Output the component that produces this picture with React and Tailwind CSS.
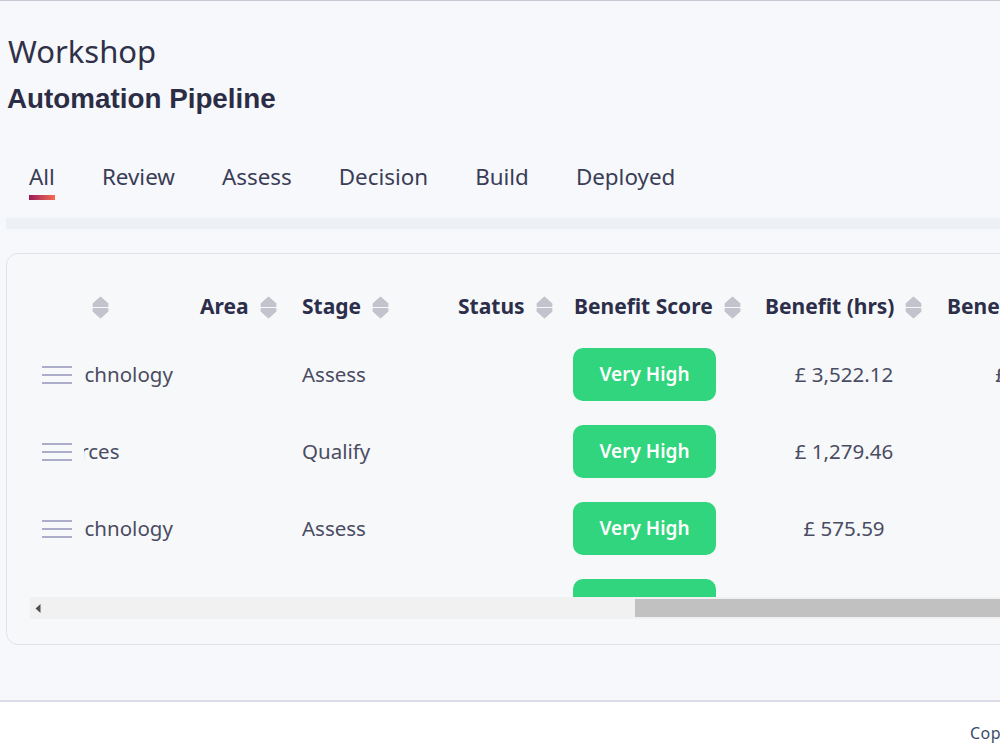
import React from "react";

const SortIcon = () => (
  <svg width="17" height="23" viewBox="0 0 17 23" className="shrink-0">
    <path d="M8.5 1.2 L15.8 7.6 L15.8 10.3 L1.2 10.3 L1.2 7.6 Z" fill="#c3c3cd" stroke="#c3c3cd" strokeWidth="1.2" strokeLinejoin="round" />
    <path d="M1.2 12.7 L15.8 12.7 L15.8 15.4 L8.5 21.8 L1.2 15.4 Z" fill="#c3c3cd" stroke="#c3c3cd" strokeWidth="1.2" strokeLinejoin="round" />
  </svg>
);

const Hamburger = () => (
  <div className="flex flex-col gap-[6px] w-[30px]">
    <div className="h-[2px] bg-[#acadcb]" />
    <div className="h-[2px] bg-[#acadcb]" />
    <div className="h-[2px] bg-[#acadcb]" />
  </div>
);

const HeadCell = ({ w, label, pl = "pl-[10px]" }) => (
  <div className={`${w} ${pl} shrink-0 flex items-center gap-[11px] whitespace-nowrap`}>
    <span className="font-bold text-[21px] text-[#2c2e4a]">{label}</span>
    <SortIcon />
  </div>
);

const rows = [
  { c1: "Technology", ml: "-ml-[21px]", stage: "Assess", hrs: "£ 3,522.12", last: "£ 1,761.06", show: true },
  { c1: "Resources", ml: "-ml-[63px]", stage: "Qualify", hrs: "£ 1,279.46", last: "£ 639.73", show: true },
  { c1: "Technology", ml: "-ml-[21px]", stage: "Assess", hrs: "£ 575.59", last: "£ 287.80", show: true },
  { c1: "", ml: "", stage: "", hrs: "", last: "", show: false },
];

const tabs = ["All", "Review", "Assess", "Decision", "Build", "Deployed"];

export default function App() {
  return (
    <div className="w-full min-h-[750px] overflow-hidden bg-white" style={{ fontFamily: '"Noto Sans", "Open Sans", sans-serif' }}>
      <main className="w-[1120px] h-[702px] bg-[#f7f8fb] border-t border-[#c8c8d2] border-b-2 border-b-[#dddbe8] pl-[6px]">
        <h1 className="mt-[31px] ml-[2px] text-[31px] leading-[38px] font-normal text-[#2f3149]">Workshop</h1>
        <h2
          className="mt-[13px] ml-[1px] text-[27.8px] leading-[32px] font-bold text-[#2b2d45]"
          style={{ fontFamily: '"Liberation Sans", Arial, sans-serif' }}
        >
          Automation Pipeline
        </h2>

        <nav className="mt-[47px] pl-[23px] flex gap-[47px]">
          {tabs.map((t, i) => (
            <div key={t} className="flex flex-col items-stretch">
              <span className="text-[22.4px] leading-[30px] text-[#3a3d56] whitespace-nowrap">{t}</span>
              {i === 0 ? (
                <div className="mt-[3px] h-[5px] bg-gradient-to-r from-[#991858] to-[#f76b4f]" />
              ) : (
                <div className="mt-[3px] h-[5px]" />
              )}
            </div>
          ))}
        </nav>

        <div className="mt-[18px] h-[11px] bg-[#edf0f5]" />

        <section className="mt-[24px] border border-[#e1e3e8] rounded-[12px] bg-[#f7f8fa] pt-[24px] pl-[23px] pb-[25px]">
          <div className="h-[319px] overflow-hidden flex flex-col">
            {/* header row */}
            <div className="h-[58px] shrink-0 flex items-center">
              <div className="w-[54px] shrink-0" />
              <div className="flex-1 min-w-0 overflow-hidden flex items-center">
                <div className="w-[106px] shrink-0 pl-[8px] flex items-center">
                  <SortIcon />
                </div>
                <HeadCell w="w-[102px]" label="Area" />
                <HeadCell w="w-[156px]" label="Stage" />
                <HeadCell w="w-[116px]" label="Status" />
                <HeadCell w="w-[191px]" label="Benefit Score" />
                <HeadCell w="w-[182px]" label="Benefit (hrs)" />
                <HeadCell w="w-[219px]" label="Benefit (£)" />
              </div>
            </div>

            {rows.map((r, idx) => (
              <div key={idx} className="h-[77px] shrink-0 flex items-center">
                <div className="w-[54px] shrink-0 pl-[12px]">
                  {r.show ? <Hamburger /> : null}
                </div>
                <div className="flex-1 min-w-0 overflow-hidden flex items-center text-[20.5px] text-[#4a4c63]">
                  <div className="w-[106px] shrink-0 overflow-hidden whitespace-nowrap">
                    <span className={`inline-block ${r.ml}`}>{r.c1}</span>
                  </div>
                  <div className="w-[102px] shrink-0" />
                  <div className="w-[156px] shrink-0 pl-[10px] whitespace-nowrap">{r.stage}</div>
                  <div className="w-[116px] shrink-0" />
                  <div className="w-[191px] shrink-0 pl-[9px]">
                    <div className="w-[143px] h-[53px] rounded-[10px] bg-[#30d57d] flex items-center justify-center text-white text-[19px] font-semibold">
                      {r.show ? "Very High" : ""}
                    </div>
                  </div>
                  <div className="w-[182px] shrink-0 pl-[10px] pr-[14px] text-center whitespace-nowrap">{r.hrs}</div>
                  <div className="w-[219px] shrink-0 pl-[10px] pr-[14px] text-center whitespace-nowrap">{r.last}</div>
                </div>
              </div>
            ))}
          </div>

          {/* scrollbar */}
          <div className="h-[22px] bg-[#f1f1f1] flex items-center">
            <div className="w-[20px] h-full flex items-center justify-center">
              <svg width="6" height="9" viewBox="0 0 6 9">
                <path d="M5.5 0 L0.5 4.5 L5.5 9 Z" fill="#505050" />
              </svg>
            </div>
            <div className="ml-[589px] h-[18px] w-[600px] bg-[#c1c1c1]" />
          </div>
        </section>
      </main>
      <footer className="bg-white h-[48px] pt-[19px] pl-[970px] whitespace-nowrap">
        <span className="text-[16px] leading-[24px] text-[#3c4a6b] tracking-[0.5px]">Copyright © 2024 Automation Pipeline. All rights reserved.</span>
      </footer>
    </div>
  );
}
